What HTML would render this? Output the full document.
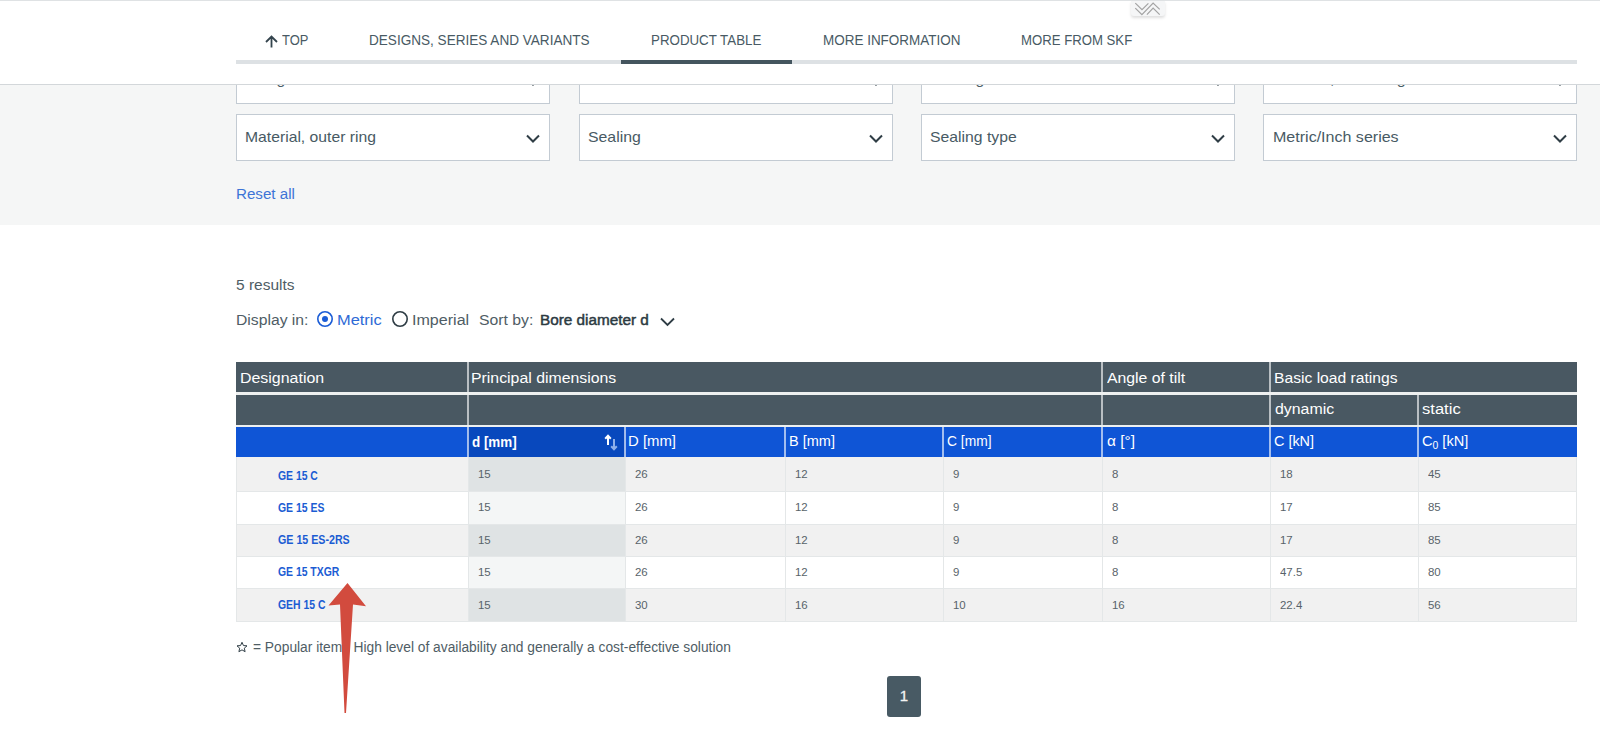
<!DOCTYPE html>
<html><head><meta charset="utf-8">
<style>
*{box-sizing:border-box;margin:0;padding:0}
html,body{width:1600px;height:751px;overflow:hidden;background:#fff;font-family:"Liberation Sans",sans-serif;color:#485a64}
.a,.r,.t{position:absolute}
.t{white-space:nowrap;transform-origin:0 0;line-height:1;z-index:3}
.r{z-index:1}
#topline{left:0;top:0;width:1600px;height:1px;background:#dfe2e4}
#hdr{left:0;top:0;width:1600px;height:85px;background:#fff;border-bottom:1px solid #d3d7da;z-index:2}
#track{left:236px;top:60px;width:1341px;height:4px;background:#dde1e4;z-index:2}
#active{left:621px;top:60px;width:171px;height:4px;background:#44555e;z-index:2}
#filt{left:0;top:85px;width:1600px;height:139.5px;background:#f5f6f6;z-index:0}
.box{background:#fff;border:1px solid #c3cbd3;width:314px;height:47px;z-index:1}
.box svg{position:absolute;right:9px;top:19px}
#pg{left:887px;top:676px;width:34px;height:41px;background:#485a64;border-radius:3px;color:#f4f4f4;font-size:15px;text-align:center;line-height:39px;-webkit-text-stroke:0.3px #f4f4f4}
</style></head><body>
<div id="topline" class="a" style="z-index:3"></div>
<div id="hdr" class="a"></div>
<svg class="a" style="left:265.3px;top:34.5px;z-index:3" width="13" height="13" viewBox="0 0 13 13"><path d="M6.5 12.5V1.8M1 7L6.5 1.5 12 7" stroke="#34444d" stroke-width="1.8" fill="none"/></svg>
<div id="track" class="a"></div>
<div id="active" class="a"></div>
<div id="filt" class="a"></div>
<div class="a box" style="left:236px;top:56.5px"><svg width="14" height="9" viewBox="0 0 14 9"><path d="M1 1.5l6 6 6-6" stroke="#2f3d45" stroke-width="2" fill="none"/></svg></div>
<div class="a box" style="left:578.5px;top:56.5px"><svg width="14" height="9" viewBox="0 0 14 9"><path d="M1 1.5l6 6 6-6" stroke="#2f3d45" stroke-width="2" fill="none"/></svg></div>
<div class="a box" style="left:921px;top:56.5px"><svg width="14" height="9" viewBox="0 0 14 9"><path d="M1 1.5l6 6 6-6" stroke="#2f3d45" stroke-width="2" fill="none"/></svg></div>
<div class="a box" style="left:1263px;top:56.5px"><svg width="14" height="9" viewBox="0 0 14 9"><path d="M1 1.5l6 6 6-6" stroke="#2f3d45" stroke-width="2" fill="none"/></svg></div>
<div class="a box" style="left:236px;top:113.5px"><svg width="14" height="9" viewBox="0 0 14 9"><path d="M1 1.5l6 6 6-6" stroke="#2f3d45" stroke-width="2" fill="none"/></svg></div>
<div class="a box" style="left:578.5px;top:113.5px"><svg width="14" height="9" viewBox="0 0 14 9"><path d="M1 1.5l6 6 6-6" stroke="#2f3d45" stroke-width="2" fill="none"/></svg></div>
<div class="a box" style="left:921px;top:113.5px"><svg width="14" height="9" viewBox="0 0 14 9"><path d="M1 1.5l6 6 6-6" stroke="#2f3d45" stroke-width="2" fill="none"/></svg></div>
<div class="a box" style="left:1263px;top:113.5px"><svg width="14" height="9" viewBox="0 0 14 9"><path d="M1 1.5l6 6 6-6" stroke="#2f3d45" stroke-width="2" fill="none"/></svg></div>
<svg class="a" style="left:316px;top:310px" width="18" height="18" viewBox="0 0 18 18"><circle cx="9" cy="9" r="7.2" stroke="#1a5cd6" stroke-width="1.6" fill="none"/><circle cx="9" cy="9" r="3" fill="#1a5cd6"/></svg>
<svg class="a" style="left:391px;top:310px" width="18" height="18" viewBox="0 0 18 18"><circle cx="9" cy="9" r="7.2" stroke="#2f3d45" stroke-width="1.6" fill="none"/></svg>
<svg class="a" style="left:660px;top:317px" width="15" height="10" viewBox="0 0 15 10"><path d="M1 1.5l6.5 6.5 6.5-6.5" stroke="#2f3d45" stroke-width="1.8" fill="none"/></svg>
<svg class="a" style="left:236.3px;top:641px" width="12" height="12" viewBox="0 0 24 24"><path d="M12 2.5l2.9 6.6 7.1.6-5.4 4.7 1.6 7-6.2-3.7-6.2 3.7 1.6-7L2 9.7l7.1-.6z" stroke="#2f3d45" stroke-width="2" fill="none" stroke-linejoin="round"/></svg>
<div class="r" style="left:236px;top:362px;width:1341px;height:95.5px;background:#eef0f0"></div>
<div class="r" style="left:236px;top:362px;width:1341px;height:30.30000000000001px;background:#495862"></div>
<div class="r" style="left:236px;top:394.9px;width:1341px;height:29.80000000000001px;background:#495862"></div>
<div class="r" style="left:236px;top:426.9px;width:1341px;height:30.30000000000001px;background:#0f55d6"></div>
<div class="r" style="left:468px;top:426.9px;width:157px;height:30.30000000000001px;background:#0848bd"></div>
<div class="r" style="left:467px;top:362px;width:2px;height:30.30000000000001px;background:rgba(255,255,255,0.62)"></div>
<div class="r" style="left:1101px;top:362px;width:2px;height:30.30000000000001px;background:rgba(255,255,255,0.62)"></div>
<div class="r" style="left:1269px;top:362px;width:2px;height:30.30000000000001px;background:rgba(255,255,255,0.62)"></div>
<div class="r" style="left:467px;top:394.9px;width:2px;height:29.80000000000001px;background:rgba(255,255,255,0.62)"></div>
<div class="r" style="left:1101px;top:394.9px;width:2px;height:29.80000000000001px;background:rgba(255,255,255,0.62)"></div>
<div class="r" style="left:1269px;top:394.9px;width:2px;height:29.80000000000001px;background:rgba(255,255,255,0.62)"></div>
<div class="r" style="left:1417px;top:394.9px;width:2px;height:29.80000000000001px;background:rgba(255,255,255,0.62)"></div>
<div class="r" style="left:467px;top:426.9px;width:2px;height:30.30000000000001px;background:rgba(255,255,255,0.62)"></div>
<div class="r" style="left:624px;top:426.9px;width:2px;height:30.30000000000001px;background:rgba(255,255,255,0.62)"></div>
<div class="r" style="left:784px;top:426.9px;width:2px;height:30.30000000000001px;background:rgba(255,255,255,0.62)"></div>
<div class="r" style="left:942px;top:426.9px;width:2px;height:30.30000000000001px;background:rgba(255,255,255,0.62)"></div>
<div class="r" style="left:1101px;top:426.9px;width:2px;height:30.30000000000001px;background:rgba(255,255,255,0.62)"></div>
<div class="r" style="left:1269px;top:426.9px;width:2px;height:30.30000000000001px;background:rgba(255,255,255,0.62)"></div>
<div class="r" style="left:1417px;top:426.9px;width:2px;height:30.30000000000001px;background:rgba(255,255,255,0.62)"></div>
<div class="r" style="left:236px;top:457.2px;width:1341px;height:164.59999999999997px;background:#e4e7e8"></div>
<div class="r" style="left:237px;top:457.2px;width:231px;height:33.80000000000001px;background:#f1f1f1"></div>
<div class="r" style="left:469px;top:457.2px;width:156px;height:33.80000000000001px;background:#dfe3e4"></div>
<div class="r" style="left:626px;top:457.2px;width:159px;height:33.80000000000001px;background:#f1f1f1"></div>
<div class="r" style="left:786px;top:457.2px;width:157px;height:33.80000000000001px;background:#f1f1f1"></div>
<div class="r" style="left:944px;top:457.2px;width:158px;height:33.80000000000001px;background:#f1f1f1"></div>
<div class="r" style="left:1103px;top:457.2px;width:167px;height:33.80000000000001px;background:#f1f1f1"></div>
<div class="r" style="left:1271px;top:457.2px;width:147px;height:33.80000000000001px;background:#f1f1f1"></div>
<div class="r" style="left:1419px;top:457.2px;width:157px;height:33.80000000000001px;background:#f1f1f1"></div>
<div class="r" style="left:237px;top:492px;width:231px;height:31.5px;background:#ffffff"></div>
<div class="r" style="left:469px;top:492px;width:156px;height:31.5px;background:#f4f6f6"></div>
<div class="r" style="left:626px;top:492px;width:159px;height:31.5px;background:#ffffff"></div>
<div class="r" style="left:786px;top:492px;width:157px;height:31.5px;background:#ffffff"></div>
<div class="r" style="left:944px;top:492px;width:158px;height:31.5px;background:#ffffff"></div>
<div class="r" style="left:1103px;top:492px;width:167px;height:31.5px;background:#ffffff"></div>
<div class="r" style="left:1271px;top:492px;width:147px;height:31.5px;background:#ffffff"></div>
<div class="r" style="left:1419px;top:492px;width:157px;height:31.5px;background:#ffffff"></div>
<div class="r" style="left:237px;top:524.5px;width:231px;height:31.5px;background:#f1f1f1"></div>
<div class="r" style="left:469px;top:524.5px;width:156px;height:31.5px;background:#dfe3e4"></div>
<div class="r" style="left:626px;top:524.5px;width:159px;height:31.5px;background:#f1f1f1"></div>
<div class="r" style="left:786px;top:524.5px;width:157px;height:31.5px;background:#f1f1f1"></div>
<div class="r" style="left:944px;top:524.5px;width:158px;height:31.5px;background:#f1f1f1"></div>
<div class="r" style="left:1103px;top:524.5px;width:167px;height:31.5px;background:#f1f1f1"></div>
<div class="r" style="left:1271px;top:524.5px;width:147px;height:31.5px;background:#f1f1f1"></div>
<div class="r" style="left:1419px;top:524.5px;width:157px;height:31.5px;background:#f1f1f1"></div>
<div class="r" style="left:237px;top:557px;width:231px;height:31.299999999999955px;background:#ffffff"></div>
<div class="r" style="left:469px;top:557px;width:156px;height:31.299999999999955px;background:#f4f6f6"></div>
<div class="r" style="left:626px;top:557px;width:159px;height:31.299999999999955px;background:#ffffff"></div>
<div class="r" style="left:786px;top:557px;width:157px;height:31.299999999999955px;background:#ffffff"></div>
<div class="r" style="left:944px;top:557px;width:158px;height:31.299999999999955px;background:#ffffff"></div>
<div class="r" style="left:1103px;top:557px;width:167px;height:31.299999999999955px;background:#ffffff"></div>
<div class="r" style="left:1271px;top:557px;width:147px;height:31.299999999999955px;background:#ffffff"></div>
<div class="r" style="left:1419px;top:557px;width:157px;height:31.299999999999955px;background:#ffffff"></div>
<div class="r" style="left:237px;top:589.3px;width:231px;height:31.5px;background:#f1f1f1"></div>
<div class="r" style="left:469px;top:589.3px;width:156px;height:31.5px;background:#dfe3e4"></div>
<div class="r" style="left:626px;top:589.3px;width:159px;height:31.5px;background:#f1f1f1"></div>
<div class="r" style="left:786px;top:589.3px;width:157px;height:31.5px;background:#f1f1f1"></div>
<div class="r" style="left:944px;top:589.3px;width:158px;height:31.5px;background:#f1f1f1"></div>
<div class="r" style="left:1103px;top:589.3px;width:167px;height:31.5px;background:#f1f1f1"></div>
<div class="r" style="left:1271px;top:589.3px;width:147px;height:31.5px;background:#f1f1f1"></div>
<div class="r" style="left:1419px;top:589.3px;width:157px;height:31.5px;background:#f1f1f1"></div>

<svg class="a" style="left:604px;top:434px;z-index:3" width="14" height="17" viewBox="0 0 14 17"><path d="M4 2v9M1.2 4.8L4 1.8 6.8 4.8" stroke="#fff" stroke-width="2" fill="none"/><path d="M10 5v10M7.2 12.2L10 15.2 12.8 12.2" stroke="#8fb0ea" stroke-width="2" fill="none"/></svg>
<div class="t" style="left:282.33px;top:32.00px;font-size:15.5px;color:#485a64;transform:scaleX(0.8346)">TOP</div>
<div class="t" style="left:369.11px;top:32.00px;font-size:15.5px;color:#485a64;transform:scaleX(0.8751)">DESIGNS, SERIES AND VARIANTS</div>
<div class="t" style="left:650.67px;top:32.00px;font-size:15.5px;color:#485a64;transform:scaleX(0.8597)">PRODUCT TABLE</div>
<div class="t" style="left:822.65px;top:32.00px;font-size:15.5px;color:#485a64;transform:scaleX(0.8687)">MORE INFORMATION</div>
<div class="t" style="left:1021.37px;top:32.00px;font-size:15.5px;color:#485a64;transform:scaleX(0.8496)">MORE FROM SKF</div>
<div class="t" style="left:245.45px;top:129.25px;font-size:15px;color:#485a64;transform:scaleX(1.0473)">Material, outer ring</div>
<div class="t" style="left:587.60px;top:129.25px;font-size:15px;color:#485a64;transform:scaleX(1.0542)">Sealing</div>
<div class="t" style="left:930.35px;top:129.25px;font-size:15px;color:#485a64;transform:scaleX(1.0500)">Sealing type</div>
<div class="t" style="left:1272.93px;top:129.25px;font-size:15px;color:#485a64;transform:scaleX(1.0690)">Metric/Inch series</div>
<div class="t" style="left:235.71px;top:187.25px;font-size:14px;color:#3d74d6;transform:scaleX(1.0823)">Reset all</div>
<div class="t" style="left:236.00px;top:278.00px;font-size:14px;color:#4f5d65;transform:scaleX(1.1063)">5 results</div>
<div class="t" style="left:235.68px;top:312.62px;font-size:14px;color:#4f5d65;transform:scaleX(1.1216)">Display in:</div>
<div class="t" style="left:337.42px;top:312.62px;font-size:14px;color:#2e6ad6;transform:scaleX(1.1717)">Metric</div>
<div class="t" style="left:411.85px;top:312.62px;font-size:14px;color:#4f5d65;transform:scaleX(1.1473)">Imperial</div>
<div class="t" style="left:479.15px;top:312.62px;font-size:14px;color:#4f5d65;transform:scaleX(1.1274)">Sort by:</div>
<div class="t" style="left:539.72px;top:312.62px;font-size:14px;color:#2c3a42;-webkit-text-stroke:0.45px #2c3a42;transform:scaleX(1.0930)">Bore diameter d</div>
<div class="t" style="left:239.86px;top:370.50px;font-size:14px;color:#fff;transform:scaleX(1.1380)">Designation</div>
<div class="t" style="left:471.47px;top:370.50px;font-size:14px;color:#fff;transform:scaleX(1.1313)">Principal dimensions</div>
<div class="t" style="left:1107.00px;top:370.50px;font-size:14px;color:#fff;transform:scaleX(1.1286)">Angle of tilt</div>
<div class="t" style="left:1273.88px;top:370.50px;font-size:14px;color:#fff;transform:scaleX(1.1182)">Basic load ratings</div>
<div class="t" style="left:1275.00px;top:402.25px;font-size:14px;color:#fff;transform:scaleX(1.1346)">dynamic</div>
<div class="t" style="left:1422.00px;top:402.25px;font-size:14px;color:#fff;transform:scaleX(1.1834)">static</div>
<div class="t" style="left:472.25px;top:435.00px;font-size:14px;color:#fff;font-weight:bold;transform:scaleX(0.9574)">d [mm]</div>
<div class="t" style="left:628.21px;top:434.25px;font-size:14px;color:#fff;transform:scaleX(1.0643)">D [mm]</div>
<div class="t" style="left:788.73px;top:434.25px;font-size:14px;color:#fff;transform:scaleX(1.0365)">B [mm]</div>
<div class="t" style="left:947.49px;top:434.25px;font-size:14px;color:#fff;transform:scaleX(0.9877)">C [mm]</div>
<div class="t" style="left:1107.26px;top:434.25px;font-size:14px;color:#fff;transform:scaleX(1.1007)">&alpha; [&deg;]</div>
<div class="t" style="left:1274.49px;top:434.25px;font-size:14px;color:#fff;transform:scaleX(1.0289)">C [kN]</div>
<div class="t" style="left:1421.73px;top:434.25px;font-size:14px;color:#fff;transform:scaleX(1.0393)">C<span style="font-size:10px;position:relative;top:3px">0</span> [kN]</div>
<div class="t" style="left:278.00px;top:469.50px;font-size:12px;font-weight:bold;color:#1b5cd3;transform:scaleX(0.8667)">GE 15 C</div>
<div class="t" style="left:278.00px;top:501.75px;font-size:12px;font-weight:bold;color:#1b5cd3;transform:scaleX(0.8697)">GE 15 ES</div>
<div class="t" style="left:278.00px;top:534.00px;font-size:12px;font-weight:bold;color:#1b5cd3;transform:scaleX(0.8889)">GE 15 ES-2RS</div>
<div class="t" style="left:278.00px;top:566.40px;font-size:12px;font-weight:bold;color:#1b5cd3;transform:scaleX(0.8667)">GE 15 TXGR</div>
<div class="t" style="left:278.00px;top:598.90px;font-size:12px;font-weight:bold;color:#1b5cd3;transform:scaleX(0.8667)">GEH 15 C</div>
<div class="t" style="left:253.00px;top:639.70px;font-size:14px;color:#4f5d65;transform:scaleX(0.9842)">= Popular item | High level of availability and generally a cost-effective solution</div>
<div class="t" style="left:245.45px;top:71.25px;font-size:15px;color:#485a64;z-index:1;transform:scaleX(1.0473)">Designation</div>
<div class="t" style="left:587.60px;top:71.25px;font-size:15px;color:#485a64;z-index:1;transform:scaleX(1.0542)">Dimension standard</div>
<div class="t" style="left:930.35px;top:71.25px;font-size:15px;color:#485a64;z-index:1;transform:scaleX(1.0500)">Bearing material</div>
<div class="t" style="left:1272.93px;top:71.25px;font-size:15px;color:#485a64;z-index:1;transform:scaleX(1.0690)">Material, inner ring</div>
<div class="t" style="left:477.70px;top:469.00px;font-size:11px;color:#58636a;transform:scaleX(1.0398)">15</div>
<div class="t" style="left:634.70px;top:469.00px;font-size:11px;color:#58636a;transform:scaleX(1.0398)">26</div>
<div class="t" style="left:794.70px;top:469.00px;font-size:11px;color:#58636a;transform:scaleX(1.0398)">12</div>
<div class="t" style="left:952.70px;top:469.00px;font-size:11px;color:#58636a;transform:scaleX(1.0398)">9</div>
<div class="t" style="left:1111.70px;top:469.00px;font-size:11px;color:#58636a;transform:scaleX(1.0398)">8</div>
<div class="t" style="left:1279.70px;top:469.00px;font-size:11px;color:#58636a;transform:scaleX(1.0398)">18</div>
<div class="t" style="left:1427.70px;top:469.00px;font-size:11px;color:#58636a;transform:scaleX(1.0398)">45</div>
<div class="t" style="left:477.70px;top:502.00px;font-size:11px;color:#58636a;transform:scaleX(1.0398)">15</div>
<div class="t" style="left:634.70px;top:502.00px;font-size:11px;color:#58636a;transform:scaleX(1.0398)">26</div>
<div class="t" style="left:794.70px;top:502.00px;font-size:11px;color:#58636a;transform:scaleX(1.0398)">12</div>
<div class="t" style="left:952.70px;top:502.00px;font-size:11px;color:#58636a;transform:scaleX(1.0398)">9</div>
<div class="t" style="left:1111.70px;top:502.00px;font-size:11px;color:#58636a;transform:scaleX(1.0398)">8</div>
<div class="t" style="left:1279.70px;top:502.00px;font-size:11px;color:#58636a;transform:scaleX(1.0398)">17</div>
<div class="t" style="left:1427.70px;top:502.00px;font-size:11px;color:#58636a;transform:scaleX(1.0398)">85</div>
<div class="t" style="left:477.70px;top:534.50px;font-size:11px;color:#58636a;transform:scaleX(1.0398)">15</div>
<div class="t" style="left:634.70px;top:534.50px;font-size:11px;color:#58636a;transform:scaleX(1.0398)">26</div>
<div class="t" style="left:794.70px;top:534.50px;font-size:11px;color:#58636a;transform:scaleX(1.0398)">12</div>
<div class="t" style="left:952.70px;top:534.50px;font-size:11px;color:#58636a;transform:scaleX(1.0398)">9</div>
<div class="t" style="left:1111.70px;top:534.50px;font-size:11px;color:#58636a;transform:scaleX(1.0398)">8</div>
<div class="t" style="left:1279.70px;top:534.50px;font-size:11px;color:#58636a;transform:scaleX(1.0398)">17</div>
<div class="t" style="left:1427.70px;top:534.50px;font-size:11px;color:#58636a;transform:scaleX(1.0398)">85</div>
<div class="t" style="left:477.70px;top:567.00px;font-size:11px;color:#58636a;transform:scaleX(1.0398)">15</div>
<div class="t" style="left:634.70px;top:567.00px;font-size:11px;color:#58636a;transform:scaleX(1.0398)">26</div>
<div class="t" style="left:794.70px;top:567.00px;font-size:11px;color:#58636a;transform:scaleX(1.0398)">12</div>
<div class="t" style="left:952.70px;top:567.00px;font-size:11px;color:#58636a;transform:scaleX(1.0398)">9</div>
<div class="t" style="left:1111.70px;top:567.00px;font-size:11px;color:#58636a;transform:scaleX(1.0398)">8</div>
<div class="t" style="left:1279.70px;top:567.00px;font-size:11px;color:#58636a;transform:scaleX(1.0398)">47.5</div>
<div class="t" style="left:1427.70px;top:567.00px;font-size:11px;color:#58636a;transform:scaleX(1.0398)">80</div>
<div class="t" style="left:477.70px;top:599.50px;font-size:11px;color:#58636a;transform:scaleX(1.0398)">15</div>
<div class="t" style="left:634.70px;top:599.50px;font-size:11px;color:#58636a;transform:scaleX(1.0398)">30</div>
<div class="t" style="left:794.70px;top:599.50px;font-size:11px;color:#58636a;transform:scaleX(1.0398)">16</div>
<div class="t" style="left:952.70px;top:599.50px;font-size:11px;color:#58636a;transform:scaleX(1.0398)">10</div>
<div class="t" style="left:1111.70px;top:599.50px;font-size:11px;color:#58636a;transform:scaleX(1.0398)">16</div>
<div class="t" style="left:1279.70px;top:599.50px;font-size:11px;color:#58636a;transform:scaleX(1.0398)">22.4</div>
<div class="t" style="left:1427.70px;top:599.50px;font-size:11px;color:#58636a;transform:scaleX(1.0398)">56</div>

<div id="pg" class="a">1</div>
<svg class="a" style="left:0;top:0;z-index:10" width="1600" height="751" viewBox="0 0 1600 751"><path d="M347.5 583 L366 606.3 L353 604.5 L346 713 L344.5 713 L340 604.5 L328.5 605.5 Z" fill="#d24b3e"/></svg>
<div class="a" style="left:1130.5px;top:1px;width:34px;height:15px;background:#f5f6f7;border-radius:0 0 3px 3px;box-shadow:0 2px 3px rgba(0,0,0,0.13);z-index:6"></div>
<svg class="a" style="left:0;top:0;z-index:7" width="1200" height="20" viewBox="0 0 1200 20"><path d="M1135.3 3.1L1142 9.7L1148.4 3.4M1135.3 8.1L1141.9 14.7L1153.1 3.1L1159.7 9.4M1146.9 14.7L1153.1 8.1L1159.7 14.7" stroke="#a3a3a3" stroke-width="1.2" fill="none"/></svg>
</body></html>
